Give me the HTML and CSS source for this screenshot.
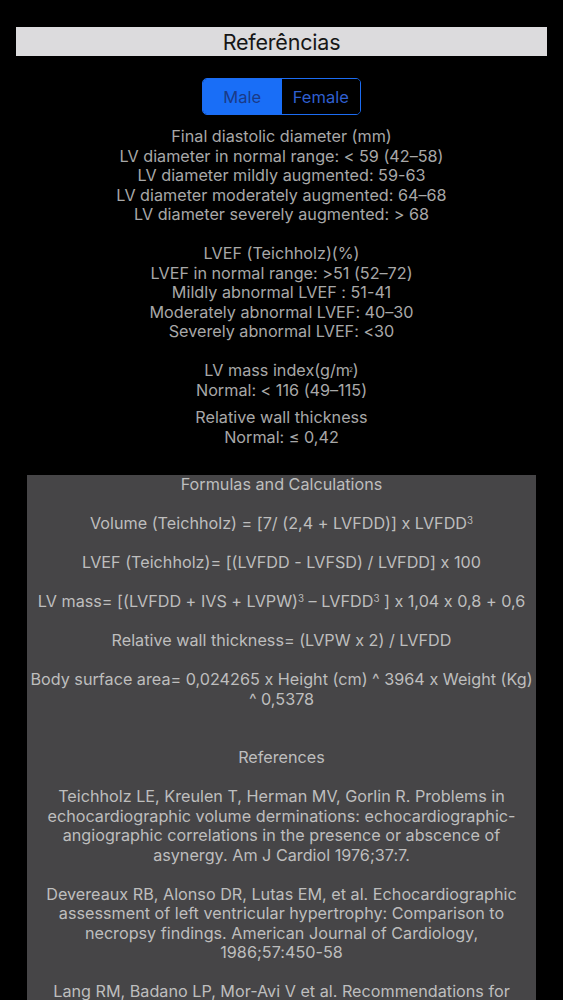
FILE: index.html
```html
<!DOCTYPE html>
<html lang="pt">
<head>
<meta charset="utf-8">
<title>Referências</title>
<link rel="stylesheet" href="styles.css">
</head>
<body>
<header class="title-bar">Referências</header>
<div class="segmented">
  <div class="seg seg-active">Male</div>
  <div class="seg">Female</div>
</div>
<section class="ranges">
  <p class="block">Final diastolic diameter (mm)<br>LV diameter in normal range: &lt; 59 (42–58)<br>LV diameter mildly augmented: 59-63<br>LV diameter moderately augmented: 64–68<br>LV diameter severely augmented: &gt; 68</p>
  <p class="block gap-line">LVEF (Teichholz)(%)<br>LVEF in normal range: &gt;51 (52–72)<br>Mildly abnormal LVEF : 51-41<br>Moderately abnormal LVEF: 40–30<br>Severely abnormal LVEF: &lt;30</p>
  <p class="block gap-line">LV mass index(g/m<sup class="tiny">2</sup>)<br>Normal: &lt; 116 (49–115)</p>
  <p class="block gap-small">Relative wall thickness<br>Normal: ≤ 0,42</p>
</section>
<section class="panel">
  <p class="pline">Formulas and Calculations</p>
  <p class="pline gap-line">Volume (Teichholz) = [7/ (2,4 + LVFDD)] x LVFDD<sup>3</sup></p>
  <p class="pline gap-line">LVEF (Teichholz)= [(LVFDD - LVFSD) / LVFDD] x 100</p>
  <p class="pline gap-line">LV mass= [(LVFDD + IVS + LVPW)<sup>3</sup> – LVFDD<sup>3</sup> ] x 1,04 x 0,8 + 0,6</p>
  <p class="pline gap-line">Relative wall thickness= (LVPW x 2) / LVFDD</p>
  <p class="pline gap-line">Body surface area= 0,024265 x Height (cm) ^ 3964 x Weight (Kg)<br>^ 0,5378</p>
  <p class="pline gap-triple">References</p>
  <p class="pline gap-line">Teichholz LE, Kreulen T, Herman MV, Gorlin R. Problems in<br>echocardiographic volume derminations: echocardiographic-<br>angiographic correlations in the presence or abscence of<br>asynergy. Am J Cardiol 1976;37:7.</p>
  <p class="pline gap-line">Devereaux RB, Alonso DR, Lutas EM, et al. Echocardiographic<br>assessment of left ventricular hypertrophy: Comparison to<br>necropsy findings. American Journal of Cardiology,<br>1986;57:450-58</p>
  <p class="pline gap-line">Lang RM, Badano LP, Mor-Avi V et al. Recommendations for<br>cardiac chamber quantification by echocardiography in adults:<br>an update from the American Society of Echocardiography</p>
</section>
</body>
</html>
```
FILE: styles.css
```css
html, body {
  margin: 0;
  padding: 0;
  background: #000;
}
body {
  font-family: Inter, "Liberation Sans", sans-serif;
  font-feature-settings: "calt" 0;
  overflow: hidden;
  height: 1000px;
}
p { margin: 0; }
.title-bar {
  margin: 27px 16px 0;
  height: 29px;
  background: #dcdbdd;
  color: #161616;
  font-size: 21.5px;
  line-height: 31px;
  text-align: center;
  letter-spacing: -0.2px;
}
.segmented {
  display: flex;
  width: 157px;
  height: 35px;
  margin: 22px auto 0;
  border: 1.5px solid #1c6cf2;
  border-radius: 5px;
  overflow: hidden;
}
.seg {
  flex: 1;
  display: flex;
  align-items: center;
  justify-content: center;
  font-size: 16.5px;
  color: #2f5fd0;
  background: #000;
}
.seg-active {
  background: #196ef7;
  color: #1a3a88;
}
.ranges {
  margin-top: 12px;
  text-align: center;
  color: #a8a8a8;
  font-size: 16.2px;
  line-height: 19.5px;
}
.gap-line { margin-top: 19.5px; }
.gap-small { margin-top: 8px; }
.gap-triple { margin-top: 39px; }
sup {
  font-size: 0.6em;
  line-height: 0;
  vertical-align: 0.55em;
}
sup.tiny {
  font-size: 0.4em;
  margin-left: -1px;
}
.panel {
  margin: 27.5px 27px 0;
  background: #464547;
  color: #bebebe;
  font-size: 16.2px;
  line-height: 19.5px;
  text-align: center;
  padding-top: 0.5px;
  white-space: nowrap;
}
```
